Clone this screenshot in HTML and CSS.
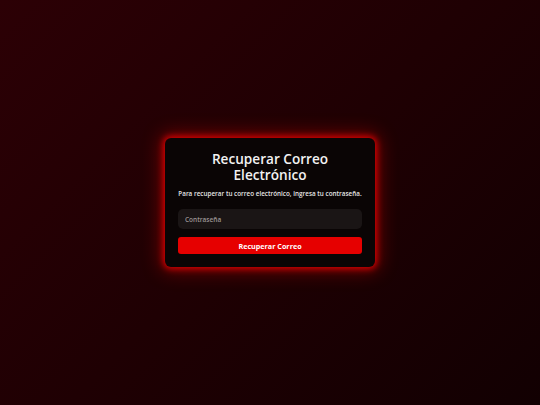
FILE: index.html
```html
<!DOCTYPE html>
<html lang="es">
<head>
<meta charset="utf-8">
<title>Recuperar Correo Electrónico</title>
<link rel="stylesheet" href="styles.css">
</head>
<body>
<main class="card">
  <h1 class="title">Recuperar Correo Electrónico</h1>
  <p class="subtitle">Para recuperar tu correo electrónico, ingresa tu contraseña.</p>
  <form class="form">
    <input class="input" type="password" placeholder="Contraseña">
    <button class="button" type="button">Recuperar Correo</button>
  </form>
</main>
</body>
</html>
```

FILE: styles.css
```css
html, body {
  margin: 0;
  height: 100%;
}
body {
  display: flex;
  align-items: center;
  justify-content: center;
  background: linear-gradient(135deg, #2c0005 0%, #1f0003 50%, #120002 100%);
  font-family: "Open Sans", "Noto Sans", sans-serif;
}
.card {
  width: 184px;
  padding: 13px;
  background: #0a0505;
  border-radius: 6px;
  box-shadow: 0 0 6px 2px rgba(255, 0, 0, 0.75), 0 0 18px 5px rgba(200, 0, 0, 0.45);
  color: #f2f2f2;
}
.title {
  margin: 0;
  font-size: 13.6px;
  line-height: 16px;
  font-weight: 600;
  text-align: center;
}
.subtitle {
  margin: 6px 0 0;
  font-size: 6.3px;
  line-height: 9px;
  font-weight: 600;
  letter-spacing: 0.02px;
  text-align: center;
  color: #e6e6e6;
  white-space: nowrap;
}
.form {
  display: flex;
  flex-direction: column;
  gap: 8px;
  margin-top: 11px;
}
.input {
  box-sizing: border-box;
  height: 20px;
  border: none;
  border-radius: 5px;
  background: #1a1515;
  padding: 0 7px;
  font-family: inherit;
  font-size: 6.5px;
  font-weight: 600;
  color: #ddd;
  outline: none;
}
.input::placeholder {
  color: #9a9494;
}
.button {
  height: 17px;
  border: none;
  border-radius: 3px;
  background: #e60000;
  color: #fff;
  font-family: inherit;
  font-size: 7.2px;
  font-weight: 700;
  padding: 0;
}
```
